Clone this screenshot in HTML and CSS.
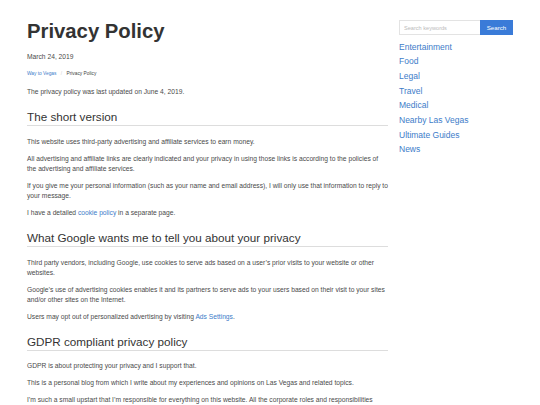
FILE: index.html
```
<!DOCTYPE html>
<html lang="en">
<head>
    <meta charset="UTF-8">
    <meta name="viewport" content="width=device-width, initial-scale=1.0">
    <title>Privacy Policy</title>
    <link rel="stylesheet" href="styles.css">
</head>
<body>

<div class="page">
    <main class="content">
        <h1>Privacy Policy</h1>
        <p class="date">March 24, 2019</p>
        <nav class="crumbs">
            <a href="#">Way to Vegas</a>
            <span class="sep">/</span>
            <span>Privacy Policy</span>
        </nav>

        <p>The privacy policy was last updated on June 4, 2019.</p>

        <h2>The short version</h2>
        <p>This website uses third-party advertising and affiliate services to earn money.</p>
        <p>All advertising and affiliate links are clearly indicated and your privacy in using those links is according to the policies of the advertising and affiliate services.</p>
        <p>If you give me your personal information (such as your name and email address), I will only use that information to reply to your message.</p>
        <p>I have a detailed <a href="#">cookie policy</a> in a separate page.</p>

        <h2>What Google wants me to tell you about your privacy</h2>
        <p>Third party vendors, including Google, use cookies to serve ads based on a user’s prior visits to your website or other websites.</p>
        <p>Google’s use of advertising cookies enables it and its partners to serve ads to your users based on their visit to your sites and/or other sites on the Internet.</p>
        <p>Users may opt out of personalized advertising by visiting <a href="#">Ads Settings</a>.</p>

        <h2>GDPR compliant privacy policy</h2>
        <p>GDPR is about protecting your privacy and I support that.</p>
        <p>This is a personal blog from which I write about my experiences and opinions on Las Vegas and related topics.</p>
        <p>I’m such a small upstart that I’m responsible for everything on this website. All the corporate roles and responsibilities belong to me, including the handling of your data.</p>
    </main>

    <aside class="sidebar">
        <form class="search" onsubmit="return false">
            <input type="text" name="q" placeholder="Search keywords">
            <button type="submit">Search</button>
        </form>
        <ul class="cats">
            <li><a href="#">Entertainment</a></li>
            <li><a href="#">Food</a></li>
            <li><a href="#">Legal</a></li>
            <li><a href="#">Travel</a></li>
            <li><a href="#">Medical</a></li>
            <li><a href="#">Nearby Las Vegas</a></li>
            <li><a href="#">Ultimate Guides</a></li>
            <li><a href="#">News</a></li>
        </ul>
    </aside>
</div>

</body>
</html>
```

FILE: styles.css
```
body {
    margin: 0;
    background: #fff;
    font-family: "Liberation Sans", Arial, sans-serif;
    color: #4a4a4a;
}
a {
    color: #3d7cc9;
    text-decoration: none;
}
.page {
    display: flex;
    gap: 11px;
    padding: 19px 27px 0;
}
.content {
    width: 361px;
    flex-shrink: 0;
}
h1 {
    font-size: 20.3px;
    line-height: 24px;
    font-weight: bold;
    color: #333;
    margin: 0 0 9px;
}
p {
    font-size: 6.7px;
    line-height: 10px;
    margin: 0 0 7px;
}
.date {
    margin-bottom: 7.5px;
}
.crumbs {
    font-size: 4.8px;
    line-height: 7px;
    color: #444;
    margin-bottom: 10.5px;
}
.crumbs .sep {
    color: #ccc;
    margin: 0 3px;
}
h2 {
    font-size: 11.7px;
    line-height: 14px;
    font-weight: normal;
    color: #333;
    margin: 13px 0 10.8px;
    padding-bottom: 1px;
    border-bottom: 1px solid #ddd;
}
.sidebar {
    width: 114px;
    flex-shrink: 0;
}
.search {
    display: flex;
    margin: 1px 0 4.5px;
    height: 15px;
}
.search input {
    width: 81px;
    box-sizing: border-box;
    border: 1px solid #e3e3e3;
    border-right: none;
    padding: 0 4px;
    font-family: inherit;
    font-size: 5.6px;
    color: #555;
    outline: none;
}
.search input::placeholder {
    color: #bbb;
}
.search button {
    width: 33px;
    border: none;
    background: #3a7bd8;
    color: #fff;
    font-family: inherit;
    font-size: 6.2px;
    padding: 0;
    cursor: pointer;
}
.cats {
    list-style: none;
    margin: 0;
    padding: 0;
}
.cats li {
    font-size: 8.5px;
    line-height: 14.7px;
}
```
